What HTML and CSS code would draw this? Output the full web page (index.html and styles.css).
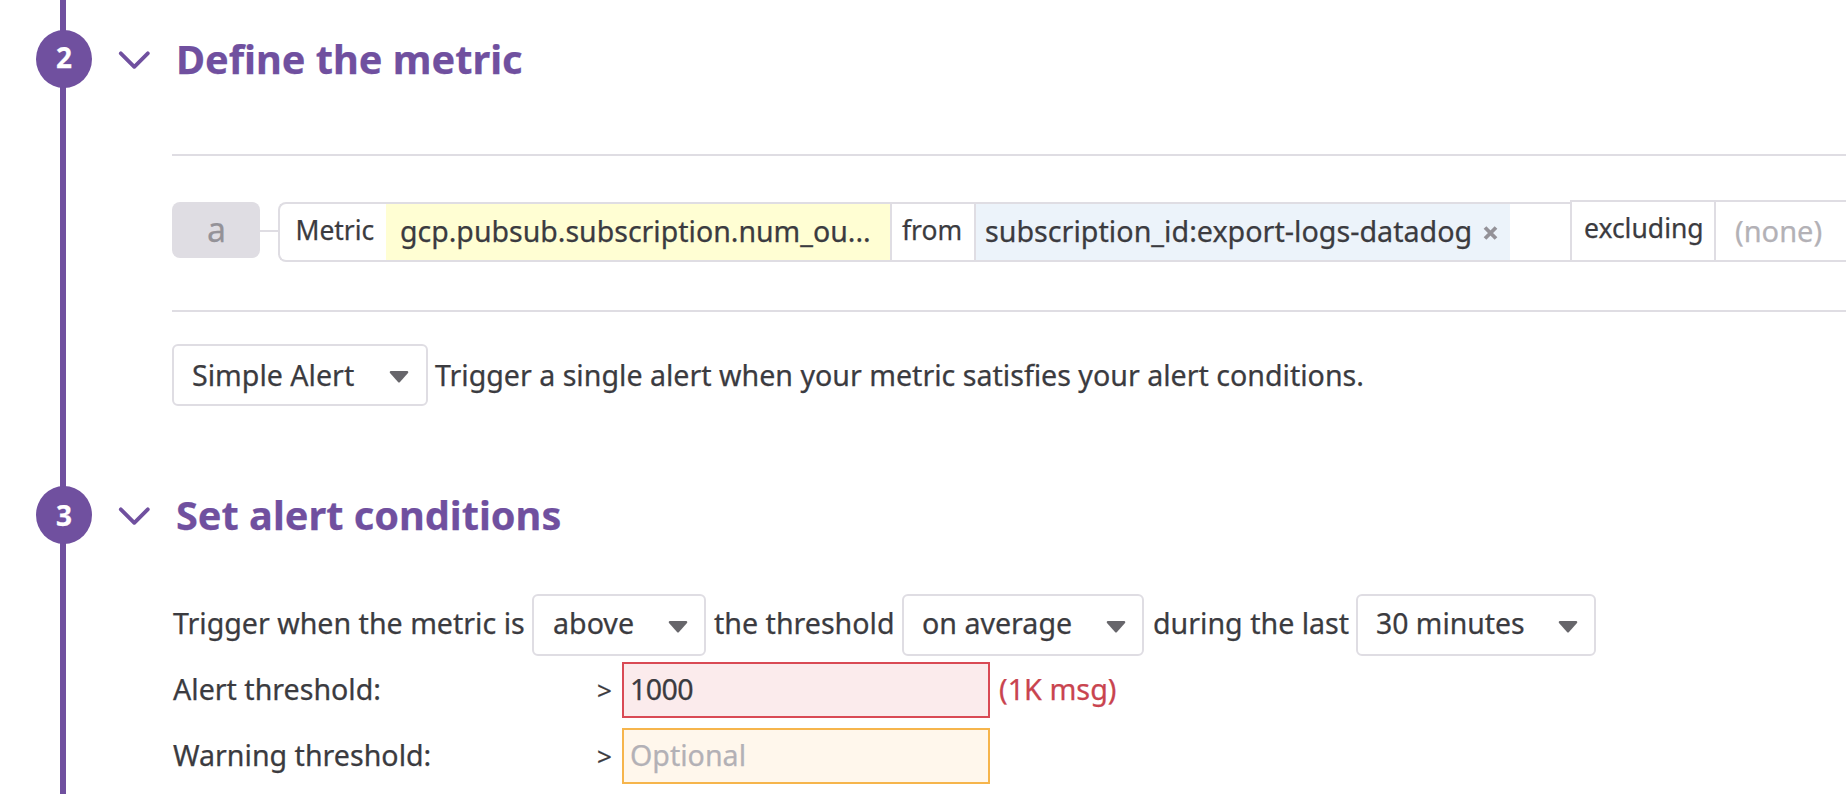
FILE: index.html
```html
<!DOCTYPE html>
<html lang="en">
<head>
<meta charset="utf-8">
<title>Monitor</title>
<link rel="stylesheet" href="styles.css">
</head>
<body>
<main class="steps">
  <section class="step step-metric">
    <header class="step-header">
      <span class="step-number">2</span>
      <svg class="chevron" width="32" height="20" viewBox="0 0 32 20"><path d="M2.8 3.3 16.3 16.8 29.8 3.3"/></svg>
      <h2 class="step-title">Define the metric</h2>
    </header>
    <div class="step-body">
      <div class="query-row">
        <span class="query-letter">a</span>
        <span class="query-link"></span>
        <div class="query-box">
          <span class="cell cell-label">Metric</span>
          <span class="cell cell-metric">gcp.pubsub.subscription.num_ou...</span>
          <span class="cell cell-from">from</span>
          <div class="cell cell-scope">
            <span class="tag">subscription_id:export-logs-datadog
              <svg class="tag-close" width="15" height="14" viewBox="0 0 15 14"><path d="M2 1.500 13 12.500M13 1.500 2 12.500"/></svg>
            </span>
          </div>
        </div>
        <div class="exclude-box">
          <span class="cell cell-excluding">excluding</span>
          <span class="cell cell-none">(none)</span>
        </div>
      </div>
      <div class="alert-type">
        <div class="select select-type"><span>Simple Alert</span><svg class="caret" width="20" height="12" viewBox="0 0 20 12"><path d="M1.5 0h17q1.5.8.5 2l-8 9q-1 1-2 0L1 2Q0 .8 1.500 0z"/></svg></div>
        <span class="alert-hint">Trigger a single alert when your metric satisfies your alert conditions.</span>
      </div>
    </div>
  </section>

  <section class="step step-conditions">
    <header class="step-header">
      <span class="step-number number-three">3</span>
      <svg class="chevron" width="32" height="20" viewBox="0 0 32 20"><path d="M2.8 3.3 16.3 16.8 29.8 3.3"/></svg>
      <h2 class="step-title">Set alert conditions</h2>
    </header>
    <div class="step-body">
      <div class="trigger-row">
        <span class="phrase phrase-metric">Trigger when the metric is</span>
        <div class="select select-above"><span>above</span><svg class="caret" width="20" height="12" viewBox="0 0 20 12"><path d="M1.5 0h17q1.5.8.5 2l-8 9q-1 1-2 0L1 2Q0 .8 1.500 0z"/></svg></div>
        <span class="phrase phrase-threshold">the threshold</span>
        <div class="select select-average"><span>on average</span><svg class="caret" width="20" height="12" viewBox="0 0 20 12"><path d="M1.5 0h17q1.5.8.5 2l-8 9q-1 1-2 0L1 2Q0 .8 1.500 0z"/></svg></div>
        <span class="phrase phrase-during">during the last</span>
        <div class="select select-window"><span>30 minutes</span><svg class="caret" width="20" height="12" viewBox="0 0 20 12"><path d="M1.5 0h17q1.5.8.5 2l-8 9q-1 1-2 0L1 2Q0 .8 1.500 0z"/></svg></div>
      </div>
      <div class="threshold-row">
        <span class="threshold-label">Alert threshold:</span>
        <span class="operator">&gt;</span>
        <input class="field field-alert" type="text" value="1000">
        <span class="unit">(1K msg)</span>
      </div>
      <div class="threshold-row">
        <span class="threshold-label">Warning threshold:</span>
        <span class="operator">&gt;</span>
        <input class="field field-warning" type="text" placeholder="Optional">
      </div>
    </div>
  </section>
</main>
</body>
</html>
```
FILE: styles.css
```css
* { box-sizing: border-box; }

body {
  margin: 0;
  overflow: hidden;
  background: #fff;
  color: #3b3b40;
  font: 28.6px/40px "Noto Sans", sans-serif;
  white-space: nowrap;
  -webkit-text-stroke: 0.25px;
}

.steps {
  height: 794px;
  padding-top: 30px;
  background: linear-gradient(#70509f, #70509f) 60px 0 / 6px 100% no-repeat;
}

.step-metric { height: 456px; }

.step-header {
  display: flex;
  align-items: center;
  height: 58px;
  padding-left: 36px;
}

.step-number {
  width: 56px;
  height: 58px;
  padding-top: 7px;
  border-radius: 50%;
  background: #70509f;
  color: #fff;
  font-size: 28px;
  font-weight: 700;
  text-align: center;
}

.number-three { padding-top: 9px; }

.chevron {
  margin: 2px 26px 0 26px;
  fill: none;
  stroke: #70509f;
  stroke-width: 3.8;
  stroke-linecap: round;
  stroke-linejoin: round;
}

.step-title {
  margin: 0;
  color: #70509f;
  font-size: 39.7px;
  font-weight: 700;
  line-height: 58px;
}

.step-body { padding-left: 172px; }

.query-row {
  display: flex;
  align-items: flex-start;
  height: 158px;
  margin-top: 66px;
  padding-top: 44px;
  border-top: 2px solid #dfdde3;
  border-bottom: 2px solid #dfdde3;
}

.query-letter {
  flex: none;
  width: 88px;
  height: 56px;
  margin-top: 2px;
  padding: 7px 0 0 1px;
  border-radius: 8px;
  background: #dfdde3;
  color: #949298;
  font-size: 34px;
  text-align: center;
}

.query-link {
  flex: none;
  width: 18px;
  height: 2px;
  margin-top: 30px;
  background: #dfdde3;
}

.query-box {
  flex: none;
  display: flex;
  width: 1292px;
  height: 60px;
  margin-top: 2px;
  border: 2px solid #dfdde3;
  border-right: 0;
  border-radius: 8px 0 0 8px;
}

.cell { flex: none; height: 56px; }

.cell-label {
  width: 106px;
  padding: 6px 0 0 15.500px;
  font-size: 26.4px;
}

.cell-metric {
  width: 504px;
  padding: 7px 0 0 14px;
  background: #fffed3;
  font-size: 28.5px;
}

.cell-from {
  width: 86px;
  padding: 6px 0 0 10px;
  border: solid #dfdde3;
  border-width: 0 2px;
  font-size: 26.4px;
}

.tag {
  display: flex;
  align-items: center;
  width: 534px;
  height: 56px;
  padding: 0 12px 2px 9px;
  justify-content: space-between;
  background: #ecf3fa;
  font-size: 28.7px;
}

.tag-close {
  margin-top: 4px;
  stroke: #949298;
  stroke-width: 3.8;
}

.exclude-box {
  flex: none;
  display: flex;
  width: 320px;
  height: 62px;
  border: 2px solid #dfdde3;
}

.cell-excluding {
  width: 144px;
  height: 58px;
  padding: 6px 0 0 12px;
  border-right: 2px solid #dfdde3;
  font-size: 26.5px;
}

.cell-none {
  height: 58px;
  padding: 9px 0 0 19px;
  color: #b3b1b6;
  font-size: 29px;
}

.alert-type {
  display: flex;
  align-items: center;
  padding-top: 32px;
}

.alert-hint { padding-left: 7px; }

.select {
  flex: none;
  display: flex;
  align-items: center;
  justify-content: space-between;
  height: 62px;
  padding: 0 16px 0 18px;
  border: 2px solid #dfdde3;
  border-radius: 6px;
}

.caret {
  margin-top: 4px;
  fill: #67666b;
}

.select-type { width: 256px; padding-right: 17px; }

.select-type .caret { margin-top: 3px; }

.trigger-row {
  display: flex;
  align-items: center;
  height: 62px;
  margin-top: 50px;
}

.phrase,
.trigger-row .select span { margin-top: -4px; }

.phrase-metric { width: 360px; padding-left: 1px; }
.phrase-threshold { width: 196px; padding-left: 8px; }
.phrase-during { width: 212px; padding-left: 9px; }

.select-above { width: 174px; padding-left: 19px; }
.select-average { width: 242px; }
.select-window { width: 240px; font-size: 28.4px; }

.threshold-row {
  display: flex;
  align-items: center;
  height: 56px;
  margin-top: 6px;
}

.threshold-row + .threshold-row { margin-top: 10px; }

.threshold-label {
  width: 425px;
  padding: 0 0 3px 1px;
}

.operator {
  width: 25px;
  font-size: 26px;
}

.field {
  width: 368px;
  height: 56px;
  margin: 0;
  padding: 0 6px 3px;
  border: 2px solid #d94a55;
  border-radius: 0;
  outline: 0;
  background: #fbebec;
  color: #3b3b40;
  font: inherit;
}

.field-alert { letter-spacing: -0.6px; }

.field-warning {
  border-color: #f6b54c;
  background: #fff7ec;
}

.field::placeholder {
  color: #b3b1b6;
  opacity: 1;
}

.unit {
  padding: 0 0 3px 9px;
  color: #c9444f;
  font-size: 28.8px;
}
```
